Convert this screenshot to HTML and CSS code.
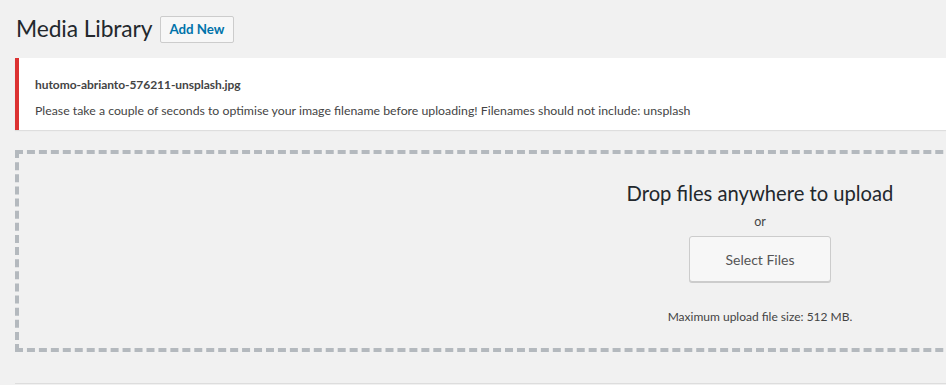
FILE: index.html
```html
<!DOCTYPE html>
<html>
<head>
<meta charset="utf-8">
<link rel="stylesheet" href="styles.css">
</head>
<body>
<div class="wrap">
  <div class="title-row">
    <h1 class="page-title">Media Library</h1>
    <a class="add-new">Add New</a>
  </div>
  <div class="notice">
    <p class="notice-file">hutomo-abrianto-576211-unsplash.jpg</p>
    <p class="notice-msg">Please take a couple of seconds to optimise your image filename before uploading! Filenames should not include: unsplash</p>
  </div>
  <div class="drop-area">
    <p class="drop-title">Drop files anywhere to upload</p>
    <p class="drop-or">or</p>
    <button class="select-files">Select Files</button>
    <p class="max-size">Maximum upload file size: 512 MB.</p>
  </div>
  <div class="toolbar"></div>
</div>
</body>
</html>
```
FILE: styles.css
```css
html, body {
  margin: 0;
  padding: 0;
}
body {
  background: #f1f1f1;
  font-family: Lato, "Open Sans", sans-serif;
  color: #444;
  overflow: hidden;
  width: 946px;
  height: 385px;
}
.wrap {
  width: 1490px;
  margin-left: 15px;
}
.title-row {
  display: flex;
  align-items: center;
  gap: 8px;
  height: 58px;
  padding-bottom: 1px;
  box-sizing: border-box;
}
.page-title {
  margin: 0 0 0 1px;
  font-size: 22.8px;
  font-weight: 400;
  line-height: 29px;
  color: #23282d;
  letter-spacing: -0.1px;
}
.add-new {
  display: inline-block;
  box-sizing: border-box;
  height: 27px;
  line-height: 25px;
  padding: 0 8px;
  border: 1px solid #ccc;
  border-radius: 2px;
  background: #f7f7f7;
  color: #0073aa;
  font-size: 13.3px;
  font-weight: 700;
  margin-top: 1px;
}
.notice {
  background: #fff;
  border-left: 4px solid #dc3232;
  box-shadow: 0 1px 1px rgba(0,0,0,0.08);
  height: 72px;
  box-sizing: border-box;
  padding: 18px 16px 0;
}
.notice p {
  margin: 0;
  font-size: 12.3px;
  color: #444;
  line-height: 17px;
}
.notice-file {
  font-weight: 700;
  font-size: 12px !important;
  letter-spacing: -0.05px;
  margin-bottom: 9px !important;
}
.drop-area {
  margin-top: 20px;
  height: 202px;
  box-sizing: border-box;
  border: 4px dashed #b4b9be;
  display: flex;
  flex-direction: column;
  align-items: center;
  padding-top: 25px;
}
.drop-area p {
  margin: 0;
}
.drop-title {
  font-size: 20.2px;
  line-height: 28px;
  color: #23282d;
}
.drop-or {
  font-size: 12.5px;
  line-height: 16px;
  margin-top: 7px !important;
  color: #444;
}
.select-files {
  margin-top: 6px;
  width: 142px;
  height: 46px;
  box-sizing: border-box;
  background: #f7f7f7;
  border: 1px solid #ccc;
  border-radius: 3px;
  box-shadow: 0 1px 0 #ccc;
  color: #555;
  font-family: inherit;
  font-size: 14px;
}
.max-size {
  margin-top: 27px !important;
  font-size: 12px;
  line-height: 16px;
  color: #444;
}
.toolbar {
  margin-top: 31px;
  border-top: 1px solid #ddd;
  height: 10px;
  background: #f1f1f1;
}
```
